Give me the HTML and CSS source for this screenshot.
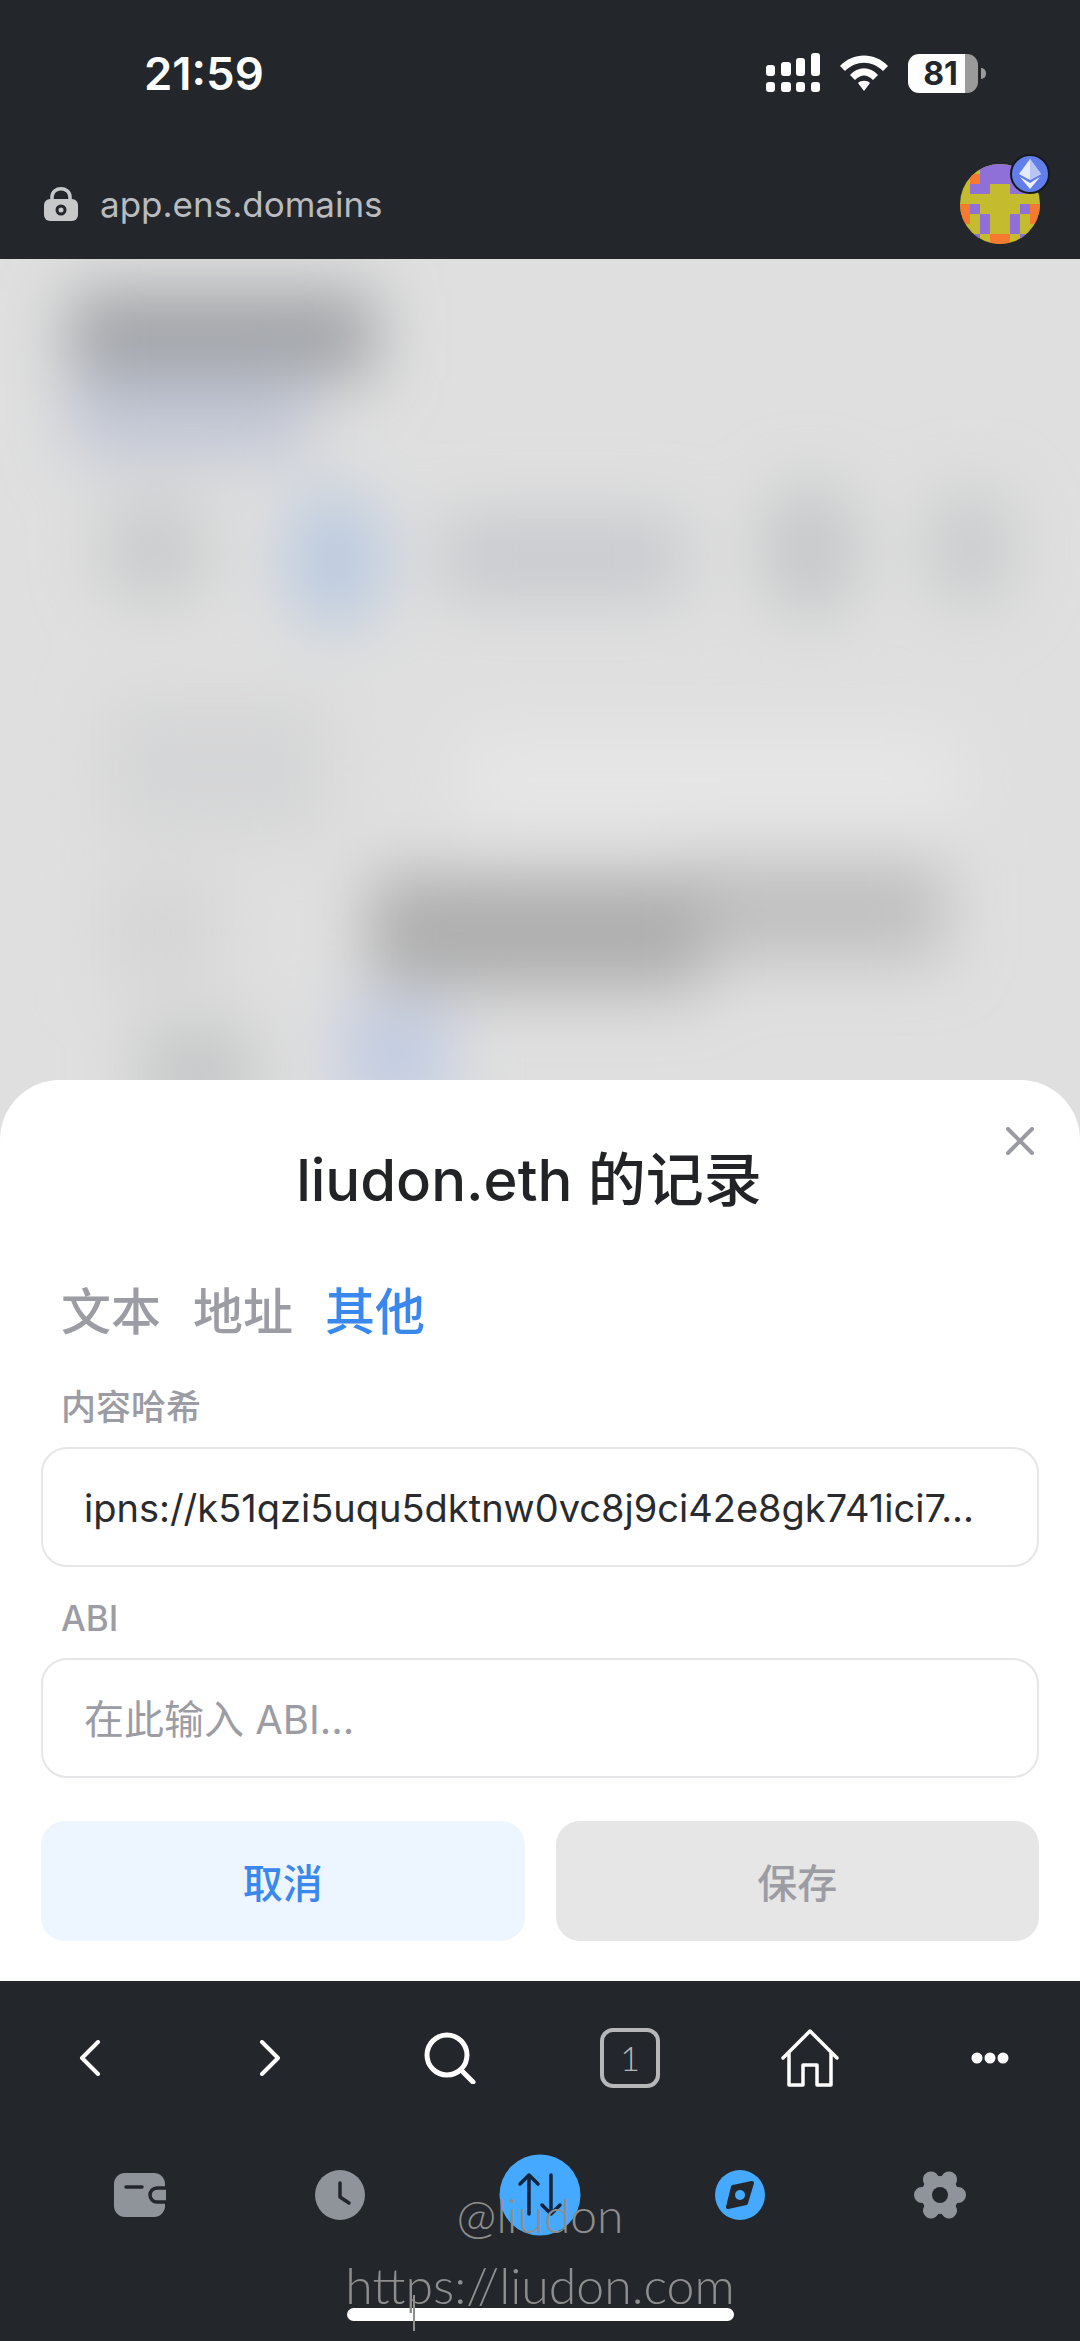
FILE: index.html
```html
<!DOCTYPE html>
<html lang="zh-CN">
<head>
    <meta charset="UTF-8">
    <meta name="viewport" content="width=device-width, initial-scale=1.0">
    <title>liudon.eth 的记录</title>
    <link rel="stylesheet" href="styles.css">
</head>
<body>
    <div class="phone">
        <header class="top-bar">
            <div class="status-row">
                <span class="time">21:59</span>
                <div class="status-icons">
                    <svg class="signal" width="56" height="40" viewBox="0 0 56 40" fill="#fff">
                        <rect x="1" y="12" width="9" height="11" rx="3"/>
                        <rect x="16" y="9" width="10" height="14" rx="3"/>
                        <rect x="31" y="5" width="9" height="18" rx="3"/>
                        <rect x="46" y="0" width="9" height="23" rx="3"/>
                        <rect x="1" y="29" width="9" height="10" rx="3"/>
                        <rect x="16" y="29" width="10" height="10" rx="3"/>
                        <rect x="31" y="29" width="9" height="10" rx="3"/>
                        <rect x="46" y="29" width="9" height="10" rx="3"/>
                    </svg>
                    <svg class="wifi" width="48" height="36" viewBox="0 0 48 36" fill="#fff">
                        <path d="M0 11 C13 -3 35 -3 48 11 L43 16 C32 5 16 5 5 16 Z"/>
                        <path d="M10 20 C18 11 30 11 38 20 L33 25 C27 19 21 19 15 25 Z"/>
                        <path d="M18 28 C21 25 27 25 30 28 L24 36 Z"/>
                    </svg>
                    <div class="battery">
                        <span class="battery-level">81</span>
                        <span class="battery-rest"></span>
                    </div>
                    <span class="battery-nub"></span>
                </div>
            </div>
            <div class="address-row">
                <div class="address">
                    <svg width="36" height="34" viewBox="0 0 36 34">
                        <path d="M9 14 V10 C9 -1 27 -1 27 10 V14" fill="none" stroke="#c6c8ca" stroke-width="3.5"/>
                        <rect x="1" y="12" width="34" height="22" rx="6" fill="#c6c8ca"/>
                        <circle cx="18" cy="23" r="4" fill="#c6c8ca" stroke="#23272b" stroke-width="3"/>
                    </svg>
                    <span class="url">app.ens.domains</span>
                </div>
                <div class="avatar">
                    <svg width="80" height="80" viewBox="0 0 80 80">
                        <defs><clipPath id="avatar-clip"><circle cx="40" cy="40" r="40"/></clipPath></defs>
                        <g clip-path="url(#avatar-clip)">
                            <rect width="80" height="80" fill="#c4bb2e"/>
                            <g fill="#8f6fd8">
                                <rect x="20" y="0" width="40" height="20"/>
                                <rect x="60" y="0" width="10" height="10"/>
                                <rect x="10" y="20" width="20" height="10"/>
                                <rect x="50" y="20" width="20" height="10"/>
                                <rect x="10" y="40" width="10" height="10"/>
                                <rect x="60" y="40" width="10" height="10"/>
                                <rect x="20" y="50" width="10" height="20"/>
                                <rect x="50" y="50" width="10" height="20"/>
                                <rect x="10" y="70" width="10" height="10"/>
                                <rect x="60" y="70" width="10" height="10"/>
                            </g>
                            <g fill="#f5792e">
                                <rect x="10" y="10" width="10" height="10"/>
                                <rect x="0" y="40" width="10" height="20"/>
                                <rect x="70" y="40" width="10" height="20"/>
                                <rect x="30" y="70" width="20" height="10"/>
                            </g>
                        </g>
                    </svg>
                    <span class="eth-badge">
                        <svg width="22" height="30" viewBox="0 0 22 30">
                            <path d="M11 0 L22 15 L11 21 L0 15 Z" fill="#e4e9fb"/>
                            <path d="M11 0 L22 15 L11 21 Z" fill="#b9c6f5"/>
                            <path d="M1 18 L11 24 L21 18 L11 30 Z" fill="#f2f4fd"/>
                        </svg>
                    </span>
                </div>
            </div>
        </header>

        <main class="content">
            <svg class="blurred-page" width="1080" height="821" viewBox="0 259 1080 821" preserveAspectRatio="none">
                <defs>
                    <filter id="soft" x="-50%" y="-50%" width="200%" height="200%"><feGaussianBlur stdDeviation="32"/></filter>
                </defs>
                <g filter="url(#soft)">
                    <rect x="460" y="730" width="500" height="100" fill="#e6e6e6"/>
                    <rect x="70" y="375" width="240" height="85" fill="#c2c8d6"/>
                    <rect x="70" y="290" width="305" height="90" fill="#a2a4a8"/>
                    <ellipse cx="155" cy="550" rx="58" ry="56" fill="#cbcccd"/>
                    <ellipse cx="335" cy="560" rx="52" ry="70" fill="#bccbe0"/>
                    <rect x="440" y="515" width="245" height="85" fill="#c9cbcf"/>
                    <ellipse cx="810" cy="550" rx="50" ry="68" fill="#c6c8c9"/>
                    <ellipse cx="970" cy="548" rx="46" ry="62" fill="#cbcccd"/>
                    <rect x="105" y="700" width="225" height="135" fill="#d5d6d7"/>
                    <rect x="105" y="875" width="115" height="115" fill="#d6d6d6"/>
                    <rect x="690" y="860" width="255" height="100" fill="#c0c0c0"/>
                    <rect x="370" y="875" width="335" height="115" fill="#aeaeae"/>
                    <rect x="140" y="1025" width="115" height="95" fill="#c6c7c8"/>
                    <rect x="340" y="1005" width="110" height="105" fill="#c2cce2"/>
                </g>
            </svg>

            <section class="sheet">
                <button class="close" aria-label="关闭">
                    <svg width="28" height="28" viewBox="0 0 28 28" stroke="#9a9aa2" stroke-width="4" stroke-linecap="round">
                        <path d="M2 2 L26 26 M26 2 L2 26"/>
                    </svg>
                </button>
                <h1 class="sheet-title">liudon.eth 的记录</h1>
                <nav class="tabs">
                    <span class="tab">文本</span>
                    <span class="tab">地址</span>
                    <span class="tab tab-active">其他</span>
                </nav>
                <div class="field-label">内容哈希</div>
                <div class="field">ipns://k51qzi5uqu5dktnw0vc8j9ci42e8gk741ici7...</div>
                <div class="field-label field-label-abi">ABI</div>
                <div class="field field-empty">在此输入 ABI...</div>
                <div class="actions">
                    <button class="btn btn-cancel">取消</button>
                    <button class="btn btn-save">保存</button>
                </div>
            </section>
        </main>

        <footer class="bottom-bar">
            <div class="browser-nav">
                <span class="nav-item">
                    <svg width="24" height="36" viewBox="0 0 24 36" fill="none" stroke="#fff" stroke-width="4" stroke-linecap="round" stroke-linejoin="round"><path d="M20 2 L4 18 L20 34"/></svg>
                </span>
                <span class="nav-item">
                    <svg width="24" height="36" viewBox="0 0 24 36" fill="none" stroke="#fff" stroke-width="4" stroke-linecap="round" stroke-linejoin="round"><path d="M4 2 L20 18 L4 34"/></svg>
                </span>
                <span class="nav-item">
                    <svg width="52" height="52" viewBox="0 0 52 52" fill="none" stroke="#fff" stroke-width="5" stroke-linecap="round"><circle cx="23" cy="23" r="20"/><path d="M37 38 L49 50"/></svg>
                </span>
                <span class="nav-item"><span class="tab-count">1</span></span>
                <span class="nav-item">
                    <svg width="58" height="58" viewBox="0 0 58 58" fill="none" stroke="#fff" stroke-width="3.5" stroke-linejoin="round" stroke-linecap="round"><path d="M2 29 L29 2 L56 29 M8 24 V56 H22 V36 H36 V56 H50 V24"/></svg>
                </span>
                <span class="nav-item">
                    <svg width="38" height="12" viewBox="0 0 38 12" fill="#fff"><circle cx="6" cy="6" r="5.5"/><circle cx="19" cy="6" r="5.5"/><circle cx="32" cy="6" r="5.5"/></svg>
                </span>
            </div>
            <div class="app-tabs">
                <span class="app-tab">
                    <svg width="52" height="44" viewBox="0 0 52 44">
                        <rect x="0" y="0" width="51" height="44" rx="11" fill="#8f949b"/>
                        <path d="M12 14 H28" stroke="#23272b" stroke-width="3.5" stroke-linecap="round"/>
                        <path d="M52 15 H43 A7 7 0 0 0 43 29 H52" fill="#8f949b" stroke="#23272b" stroke-width="3.5"/>
                    </svg>
                </span>
                <span class="app-tab">
                    <svg width="50" height="50" viewBox="0 0 50 50">
                        <circle cx="25" cy="25" r="25" fill="#8f949b"/>
                        <path d="M25 13 V27 L34 33" fill="none" stroke="#23272b" stroke-width="3.5" stroke-linecap="round" stroke-linejoin="round"/>
                    </svg>
                </span>
                <span class="app-tab">
                    <svg width="82" height="82" viewBox="0 0 82 82">
                        <circle cx="41" cy="41" r="40.500" fill="#45aaff"/>
                        <path d="M30 60 V21 M21 30 L30 21 L39 30 M52 21 V60 M43 51 L52 60 L61 51" fill="none" stroke="#10233a" stroke-width="3.5" stroke-linecap="round" stroke-linejoin="round"/>
                    </svg>
                </span>
                <span class="app-tab">
                    <svg width="50" height="50" viewBox="0 0 50 50">
                        <circle cx="25" cy="25" r="25" fill="#45aaff"/>
                        <path d="M18 17 L37 13 L31 33 L13 37 Z" fill="#23272b" stroke="#23272b" stroke-width="4" stroke-linejoin="round"/>
                        <circle cx="25" cy="25" r="5" fill="#45aaff"/>
                    </svg>
                </span>
                <span class="app-tab">
                    <svg width="52" height="50" viewBox="0 0 52 50">
                        <circle cx="26" cy="25" r="19" fill="#8f949b"/>
                        <path d="M8 25 H44 M17 9.500 L35 40.500 M35 9.500 L17 40.500" stroke="#8f949b" stroke-width="16" stroke-linecap="round"/>
                        <circle cx="26" cy="25" r="8" fill="#23272b"/>
                    </svg>
                </span>
            </div>
            <div class="home-indicator"></div>
            <div class="watermark">
                <span class="mark-handle">@liudon</span>
                <span class="mark-url">https://liudon.com</span>
            </div>
        </footer>
    </div>
</body>
</html>
```

FILE: styles.css
```css
* {
    box-sizing: border-box;
}

body {
    margin: 0;
    font-family: Inter, "Noto Sans CJK SC", sans-serif;
    background-color: #23272b;
}

.phone {
    width: 1080px;
    height: 2341px;
    display: flex;
    flex-direction: column;
    overflow: hidden;
}

/* top bar */
.top-bar {
    height: 259px;
    padding-top: 50px;
    background-color: #23272b;
}

.status-row {
    height: 46px;
    padding: 0 94px 0 144px;
    display: flex;
    justify-content: space-between;
    align-items: center;
}

.time {
    color: #fff;
    font-size: 45.5px;
    font-weight: 600;
}

.status-icons {
    display: flex;
    align-items: center;
}

.wifi {
    margin-left: 19px;
}

.battery {
    width: 70px;
    height: 39px;
    margin-left: 20px;
    display: flex;
    border-radius: 11px;
    overflow: hidden;
}

.battery-level {
    width: 57px;
    padding-left: 8px;
    background-color: #fff;
    color: #23272b;
    font-size: 32px;
    font-weight: 700;
    line-height: 39px;
    text-align: center;
}

.battery-rest {
    flex: 1;
    background-color: #9a9a9a;
}

.battery-nub {
    width: 5px;
    height: 11px;
    margin-left: 3px;
    background-color: #9a9a9a;
    border-radius: 0 6px 6px 0;
}

.address-row {
    margin-top: 68px;
    padding: 0 40px 0 43px;
    display: flex;
    justify-content: space-between;
    align-items: center;
}

.address {
    display: flex;
    align-items: center;
    gap: 21px;
}

.url {
    color: #b9bbbe;
    font-size: 35px;
    font-weight: 400;
}

.avatar {
    position: relative;
    width: 80px;
    height: 80px;
}

.eth-badge {
    position: absolute;
    top: -10px;
    right: -10px;
    width: 40px;
    height: 40px;
    display: flex;
    justify-content: center;
    align-items: center;
    background-color: #627eea;
    border: 2px solid #16191c;
    border-radius: 50%;
}

/* blurred page behind the sheet */
.content {
    position: relative;
    flex: 1;
    display: flex;
    flex-direction: column;
    justify-content: flex-end;
    background-color: #dfdfdf;
}

.blurred-page {
    position: absolute;
    top: 0;
    left: 0;
}

/* sheet */
.sheet {
    position: relative;
    height: 901px;
    padding: 70px 41px 0;
    background-color: #fff;
    border-radius: 60px 60px 0 0;
}

.close {
    position: absolute;
    top: 47px;
    right: 46px;
    padding: 0;
    display: flex;
    background: none;
    border: 0;
}

.sheet-title {
    margin: 0 0 0 -22px;
    color: #222326;
    font-size: 58px;
    font-weight: 500;
    line-height: 60px;
    text-align: center;
}

.tabs {
    margin-top: 72px;
    padding-left: 20px;
    display: flex;
    gap: 32px;
}

.tab {
    color: #9c9ca4;
    font-size: 50px;
    font-weight: 500;
    line-height: 60px;
}

.tab-active {
    color: #3a87ee;
}

.field-label {
    margin-top: 45px;
    padding-left: 20px;
    color: #9c9ca4;
    font-size: 35px;
    font-weight: 500;
    line-height: 40px;
}

.field-label-abi {
    margin-top: 31px;
}

.field {
    height: 120px;
    margin-top: 20px;
    padding-left: 41px;
    color: #2a2b2e;
    font-size: 38px;
    line-height: 119px;
    white-space: nowrap;
    border: 2px solid #e6e6e8;
    border-radius: 26px;
}

.field-empty {
    color: #9c9ca4;
    font-size: 40px;
}

.actions {
    margin-top: 43px;
    display: grid;
    grid-template-columns: 1fr 1fr;
    gap: 31px;
}

.btn {
    height: 120px;
    font-family: inherit;
    font-size: 40px;
    font-weight: 500;
    border: 0;
    border-radius: 24px;
}

.btn-cancel {
    background-color: #edf5fe;
    color: #3a87ee;
}

.btn-save {
    background-color: #e6e6e6;
    color: #9c9ca4;
}

/* bottom bar */
.bottom-bar {
    position: relative;
    height: 360px;
    padding-top: 39px;
    background-color: #23272b;
}

.browser-nav {
    height: 76px;
    display: grid;
    grid-template-columns: repeat(6, 1fr);
}

.nav-item {
    display: flex;
    justify-content: center;
    align-items: center;
}

.tab-count {
    width: 60px;
    height: 60px;
    color: #b5b7b9;
    font-family: Lato, sans-serif;
    font-size: 34px;
    font-weight: 300;
    line-height: 52px;
    text-align: center;
    border: 4px solid #b5b7b9;
    border-radius: 13px;
}

.app-tabs {
    height: 90px;
    margin-top: 54px;
    padding: 0 40px;
    display: grid;
    grid-template-columns: repeat(5, 1fr);
}

.app-tab {
    display: flex;
    justify-content: center;
    align-items: center;
}

.home-indicator {
    width: 387px;
    height: 13px;
    margin: 68px auto 0;
    background-color: #fff;
    border-radius: 7px;
}

.watermark {
    position: absolute;
    top: 206px;
    left: 0;
    width: 100%;
    display: flex;
    flex-direction: column;
    align-items: center;
    color: #8e8e8e;
    font-family: Lato, sans-serif;
    font-weight: 300;
    pointer-events: none;
}

.mark-handle {
    font-size: 48px;
    line-height: 56px;
}

.mark-url {
    position: relative;
    margin-top: 12px;
    font-size: 50px;
    line-height: 60px;
}

/* the long tail of the p runs down over the home indicator */
.mark-url::after {
    content: "";
    position: absolute;
    top: 40px;
    left: 68px;
    width: 2px;
    height: 36px;
    background-color: #8e8e8e;
}
```
